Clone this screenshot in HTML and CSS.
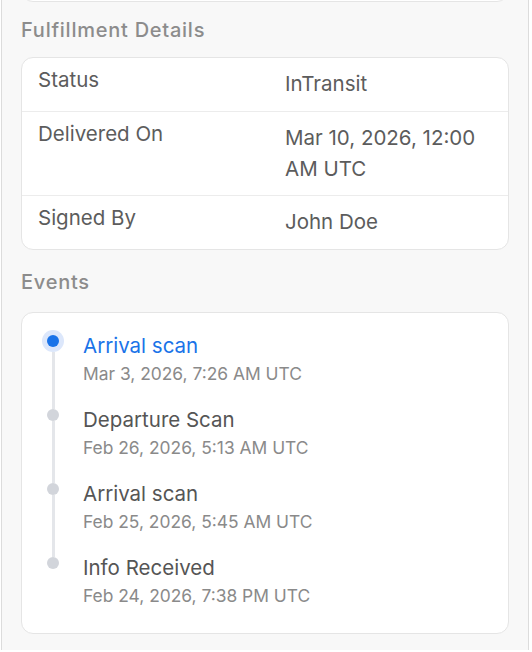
FILE: index.html
```html
<!DOCTYPE html>
<html lang="en">
<head>
  <meta charset="UTF-8" />
  <meta name="viewport" content="width=device-width, initial-scale=1.0"/>
  <title>Shipment Details</title>
  <link rel="stylesheet" href="styles.css">
</head>
<body>

  <div class="panel">
    <!-- tail of the card above, scrolled out of view -->
    <div class="card card-prev"></div>

    <h2 class="section-title">Fulfillment Details</h2>
    <div class="card details">
      <div class="row">
        <div class="label">Status</div>
        <div class="value">InTransit</div>
      </div>
      <div class="row">
        <div class="label">Delivered On</div>
        <div class="value">Mar 10, 2026, 12:00 AM UTC</div>
      </div>
      <div class="row">
        <div class="label">Signed By</div>
        <div class="value">John Doe</div>
      </div>
    </div>

    <h2 class="section-title events-title">Events</h2>
    <div class="card events">
      <div class="event active">
        <div class="marker"><span class="dot"></span><span class="line"></span></div>
        <div class="event-body">
          <div class="event-name">Arrival scan</div>
          <div class="event-date">Mar 3, 2026, 7:26 AM UTC</div>
        </div>
      </div>
      <div class="event">
        <div class="marker"><span class="dot"></span><span class="line"></span></div>
        <div class="event-body">
          <div class="event-name">Departure Scan</div>
          <div class="event-date">Feb 26, 2026, 5:13 AM UTC</div>
        </div>
      </div>
      <div class="event">
        <div class="marker"><span class="dot"></span><span class="line"></span></div>
        <div class="event-body">
          <div class="event-name">Arrival scan</div>
          <div class="event-date">Feb 25, 2026, 5:45 AM UTC</div>
        </div>
      </div>
      <div class="event">
        <div class="marker"><span class="dot"></span><span class="line"></span></div>
        <div class="event-body">
          <div class="event-name">Info Received</div>
          <div class="event-date">Feb 24, 2026, 7:38 PM UTC</div>
        </div>
      </div>
    </div>
  </div>

</body>
</html>
```

FILE: styles.css
```css
body {
  margin: 0;
  background: #fff;
  font-family: Inter, 'Noto Sans', sans-serif;
  color: #5c5c5c;
}
.panel {
  margin-left: 1px;
  width: 528px;
  min-height: 650px;
  box-sizing: border-box;
  padding: 0 19px;
  background: #f8f8f8;
  border-left: 1px solid #dcdcdc;
  border-right: 1px solid #dcdcdc;
  overflow: hidden;
}
.card {
  background: #fff;
  border: 1px solid #e5e5e5;
  border-radius: 12px;
}
.card-prev {
  height: 40px;
  box-sizing: border-box;
  margin-top: -38px;
}
.section-title {
  margin: 16px 0 15px;
  font-size: 20px;
  line-height: 24px;
  font-weight: 500;
  letter-spacing: 0.75px;
  color: #8c8c8c;
}
.events-title {
  margin: 20px 0 18px;
}
.row {
  display: grid;
  grid-template-columns: 247px 1fr;
  padding: 6px 16px 11.5px;
  border-top: 1px solid #ececec;
  font-size: 20.5px;
}
.row:first-child {
  border-top: none;
}
.label {
  line-height: 31px;
}
.value {
  padding-top: 4px;
  line-height: 31px;
}
.events {
  padding: 21px 20px 25px;
}
.event {
  display: flex;
  gap: 19px;
}
.event:not(:last-child) .event-body {
  padding-bottom: 22px;
}
.marker {
  width: 22px;
  display: flex;
  flex-direction: column;
  align-items: center;
}
.dot {
  position: relative;
  z-index: 1;
  width: 12px;
  height: 12px;
  margin-top: 1px;
  border-radius: 50%;
  background: #d2d5db;
}
.line {
  flex: 1;
  width: 3px;
  margin-bottom: -1px;
  background: #e4e6ea;
}
.event:last-child .line {
  display: none;
}
.active .dot {
  background: #1a73e8;
  box-shadow: 0 0 0 5px #dce7fb;
}
.active .line {
  margin-top: 5px;
}
.event-name {
  font-size: 20.5px;
  line-height: 24px;
  color: #555;
}
.active .event-name {
  color: #1a73e8;
}
.event-date {
  margin-top: 4px;
  font-size: 17.4px;
  line-height: 24px;
  color: #8a8a8a;
}
```
